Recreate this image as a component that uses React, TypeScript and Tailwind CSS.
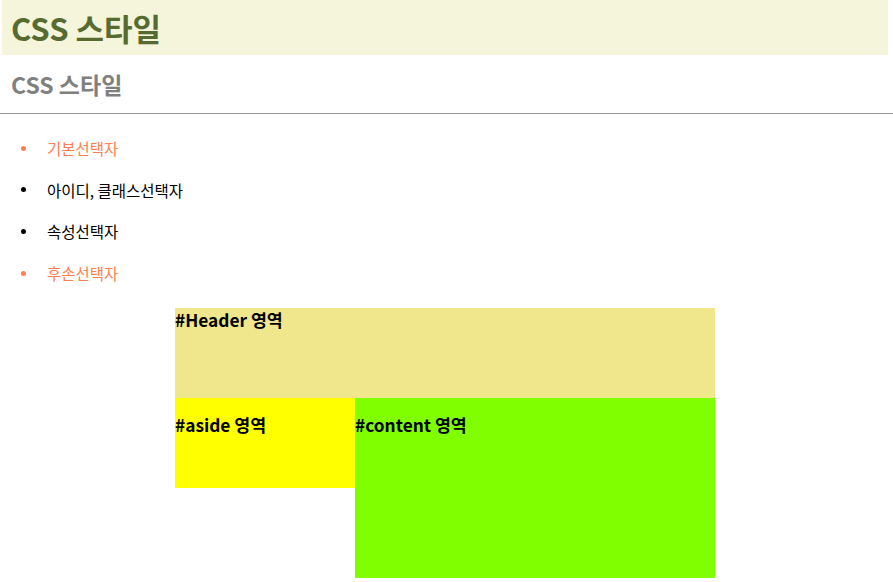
import React from 'react';

const font = { fontFamily: '"Noto Sans CJK KR", "Open Sans", sans-serif' };

const items = [
  { text: '기본선택자', color: 'text-[#ff7f50]', dot: 'bg-[#ff7f50]' },
  { text: '아이디, 클래스선택자', color: 'text-black', dot: 'bg-black' },
  { text: '속성선택자', color: 'text-black', dot: 'bg-black' },
  { text: '후손선택자', color: 'text-[#ff7f50]', dot: 'bg-[#ff7f50]' },
];

export default function App() {
  return (
    <div className="w-[893px] h-[582px] overflow-hidden bg-white" style={font}>
      <div className="pl-[2px] pr-[5px]">
        <h1 className="flex h-[55px] items-center bg-[#f5f5dc] pl-[9px] text-[31px] font-bold leading-none text-[#556b2f]">
          CSS 스타일
        </h1>
      </div>
      <h2 className="flex h-[58px] items-center pl-[11px] text-[23px] font-bold leading-none text-[#808080]">
        CSS 스타일
      </h2>
      <hr className="border-t border-[#9a9a9a]" />
      <ul className="pt-[24px] text-[15.5px] leading-[20px]">
        {items.map((it) => (
          <li key={it.text} className={`flex h-[41.7px] items-start ${it.color}`}>
            <span className="flex h-[20px] w-[47px] items-center pl-[21px]">
              <span className={`h-[5px] w-[5px] rounded-full ${it.dot}`} />
            </span>
            <span>{it.text}</span>
          </li>
        ))}
      </ul>
      <div className="ml-[175px] mt-[3px] w-[540px]">
        <div className="h-[90px] bg-[#f0e68c] pt-[1px]">
          <h3 className="text-[17.3px] font-bold leading-[22px] text-black">#Header 영역</h3>
        </div>
        <div className="flex items-start">
          <div className="h-[90px] w-[180px] bg-[#ffff00] pt-[16px]">
            <h3 className="text-[17.3px] font-bold leading-[22px] text-black">#aside 영역</h3>
          </div>
          <div className="h-[180px] w-[360px] bg-[#7fff00] pt-[16px]">
            <h3 className="text-[17.3px] font-bold leading-[22px] text-black">#content 영역</h3>
          </div>
        </div>
      </div>
    </div>
  );
}
